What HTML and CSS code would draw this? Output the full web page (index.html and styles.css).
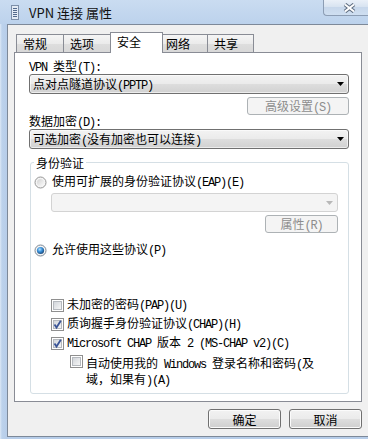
FILE: index.html
```html
<!DOCTYPE html>
<html lang="zh-CN">
<head>
    <meta charset="UTF-8">
    <title>VPN 连接 属性</title>
    <link rel="stylesheet" href="styles.css">
</head>
<body>
    <svg class="defs" width="0" height="0">
        <defs>
            <linearGradient id="ringFill" x1="0" y1="0" x2="1" y2="1">
                <stop offset="0" stop-color="#d2d2d2"/>
                <stop offset="1" stop-color="#fbfbfb"/>
            </linearGradient>
            <radialGradient id="dotFill" cx="0.4" cy="0.35" r="0.7">
                <stop offset="0" stop-color="#b8e3ff"/>
                <stop offset="0.45" stop-color="#3b93dc"/>
                <stop offset="1" stop-color="#17406f"/>
            </radialGradient>
            <linearGradient id="boxFill" x1="0" y1="0" x2="1" y2="1">
                <stop offset="0" stop-color="#cfd3d8"/>
                <stop offset="1" stop-color="#f8f8f8"/>
            </linearGradient>
        </defs>
    </svg>

    <div class="window">
        <div class="titlebar">
            <svg class="app-icon" width="8" height="15" viewBox="0 0 8 15">
                <rect x=".5" y=".5" width="7" height="14" fill="#e3ebf5" stroke="#7d8fa8"/>
                <path d="M2 3.5h4M2 5.5h4M2 7.5h4M2 9.5h4M2 11.5h4" stroke="#53698b"/>
            </svg>
            <span class="title">VPN 连接 属性</span>
            <div class="close">
                <svg width="13" height="10" viewBox="0 0 13 10">
                    <path d="M2 1.5L11 8.5M11 1.5L2 8.5" stroke="#5f6d80" stroke-width="4"/>
                    <path d="M2 1.5L11 8.5M11 1.5L2 8.5" stroke="#fff" stroke-width="2"/>
                </svg>
            </div>
        </div>

        <div class="frame">
            <div class="client">
                <div class="tabs">
                    <div class="tab t1">常规</div>
                    <div class="tab t2">选项</div>
                    <div class="tab active">安全</div>
                    <div class="tab t4">网络</div>
                    <div class="tab t5">共享</div>
                </div>

                <div class="panel">
                    <div class="label"><span class="en">VPN </span>类型<span class="en">(T):</span></div>
                    <div class="combo">
                        <span>点对点隧道协议<span class="en">(PPTP)</span></span>
                        <svg class="arrow" width="7" height="4" viewBox="0 0 7 4"><path d="M0 0h7L3.5 4z"/></svg>
                    </div>
                    <div class="btn-row">
                        <button class="btn disabled advanced">高级设置<span class="en">(S)</span></button>
                    </div>
                    <div class="label">数据加密<span class="en">(D):</span></div>
                    <div class="combo">
                        <span>可选加密<span class="en">(</span>没有加密也可以连接<span class="en">)</span></span>
                        <svg class="arrow" width="7" height="4" viewBox="0 0 7 4"><path d="M0 0h7L3.5 4z"/></svg>
                    </div>

                    <div class="group">
                        <div class="group-title">身份验证</div>

                        <div class="option radio-row">
                            <svg width="13" height="13" viewBox="0 0 13 13">
                                <circle cx="6.5" cy="6.5" r="5.5" fill="#f4f4f4" stroke="#959595"/>
                                <circle cx="6.5" cy="6.5" r="3.5" fill="url(#ringFill)"/>
                            </svg>
                            <span>使用可扩展的身份验证协议<span class="en">(EAP)(E)</span></span>
                        </div>

                        <div class="combo disabled">
                            <svg class="arrow" width="7" height="4" viewBox="0 0 7 4"><path d="M0 0h7L3.5 4z"/></svg>
                        </div>
                        <div class="btn-row inner">
                            <button class="btn disabled">属性<span class="en">(R)</span></button>
                        </div>

                        <div class="option radio-row second">
                            <svg width="13" height="13" viewBox="0 0 13 13">
                                <circle cx="6.5" cy="6.5" r="5.5" fill="#f4f4f4" stroke="#7b8794"/>
                                <circle cx="6.5" cy="6.5" r="3.6" fill="url(#dotFill)"/>
                            </svg>
                            <span>允许使用这些协议<span class="en">(P)</span></span>
                        </div>

                        <div class="checks">
                            <div class="option check-row">
                                <svg width="13" height="13" viewBox="0 0 13 13">
                                    <rect x=".5" y=".5" width="12" height="12" fill="#fff" stroke="#8f8f8f"/>
                                    <rect x="2.5" y="2.5" width="8" height="8" fill="url(#boxFill)" stroke="#b5b9be"/>
                                </svg>
                                <span>未加密的密码<span class="en">(PAP)(U)</span></span>
                            </div>
                            <div class="option check-row">
                                <svg width="13" height="13" viewBox="0 0 13 13">
                                    <rect x=".5" y=".5" width="12" height="12" fill="#fff" stroke="#8f8f8f"/>
                                    <rect x="2.5" y="2.5" width="8" height="8" fill="url(#boxFill)" stroke="#b5b9be"/>
                                    <path d="M3.5 6.5L5.5 9.5L9.8 2.8" fill="none" stroke="#3b5597" stroke-width="1.8"/>
                                </svg>
                                <span>质询握手身份验证协议<span class="en">(CHAP)(H)</span></span>
                            </div>
                            <div class="option check-row">
                                <svg width="13" height="13" viewBox="0 0 13 13">
                                    <rect x=".5" y=".5" width="12" height="12" fill="#fff" stroke="#8f8f8f"/>
                                    <rect x="2.5" y="2.5" width="8" height="8" fill="url(#boxFill)" stroke="#b5b9be"/>
                                    <path d="M3.5 6.5L5.5 9.5L9.8 2.8" fill="none" stroke="#3b5597" stroke-width="1.8"/>
                                </svg>
                                <span><span class="en">Microsoft CHAP </span>版本<span class="en"> 2 (MS-CHAP v2)(C)</span></span>
                            </div>
                            <div class="option check-row sub">
                                <svg width="13" height="13" viewBox="0 0 13 13">
                                    <rect x=".5" y=".5" width="12" height="12" fill="#fff" stroke="#8f8f8f"/>
                                    <rect x="2.5" y="2.5" width="8" height="8" fill="url(#boxFill)" stroke="#b5b9be"/>
                                </svg>
                                <span class="wrap">自动使用我的<span class="en"> Windows </span>登录名称和密码<span class="en">(</span>及<br>域，如果有<span class="en">)(A)</span></span>
                            </div>
                        </div>
                    </div>
                </div>

                <div class="actions">
                    <button class="btn">确定</button>
                    <button class="btn">取消</button>
                </div>
            </div>
        </div>
    </div>
</body>
</html>
```

FILE: styles.css
```css
* {
    box-sizing: border-box;
}
body {
    margin: 0;
    width: 368px;
    height: 439px;
    overflow: hidden;
    font-family: "Noto Sans CJK SC", sans-serif;
    font-size: 12px;
    color: #000;
}
.defs {
    display: block;
    width: 0;
    height: 0;
}
.en {
    font-family: "Liberation Mono", monospace;
    font-size: 12px;
    letter-spacing: -1.2px;
    white-space: pre;
}
.window {
    height: 439px;
    display: flex;
    flex-direction: column;
    background: linear-gradient(90deg, #dce8f6 0, #bcd2ec 2px, #b7cde9 7px);
}
.titlebar {
    height: 24px;
    display: flex;
    align-items: center;
    padding-left: 11px;
    background: linear-gradient(#cadcf1, #bcd2ec);
}
.title {
    margin-left: 10px;
    font-size: 13px;
    color: #111;
}
.close {
    margin-left: auto;
    align-self: flex-start;
    width: 45px;
    height: 16px;
    display: flex;
    align-items: center;
    justify-content: center;
    padding-left: 6px;
    border: 1px solid #8c9db4;
    border-top: 0;
    border-right: 0;
    border-radius: 0 0 0 4px;
    background: linear-gradient(#eaf0f8, #d6e2f0 50%, #c7d7eb 50%, #cfdff1);
}
.frame {
    flex: 1;
    display: flex;
    padding: 0 0 2px 7px;
}
.client {
    flex: 1;
    display: flex;
    flex-direction: column;
    padding: 0 6px;
    background: #f0f0f0;
    border: 1px solid #7d8999;
    border-right: 0;
}
.tabs {
    display: flex;
    height: 21px;
    margin: 7px 0 0 2px;
    position: relative;
    z-index: 1;
}
.tab {
    height: 18px;
    margin-top: 2px;
    margin-left: -1px;
    padding: 1px 0 0 6px;
    line-height: 16px;
    border: 1px solid #898c95;
    border-bottom: 0;
    background: linear-gradient(#f5f5f5, #ebebeb 50%, #dedede 50%, #d8d8d8);
}
.tab.t1 {
    width: 48px;
    margin-left: 0;
}
.tab.t2 {
    width: 48px;
}
.tab.active {
    width: 53px;
    height: 21px;
    margin-top: 0;
    padding: 0 0 0 6px;
    line-height: 17px;
    background: #fff;
    position: relative;
    z-index: 1;
}
.tab.t4 {
    width: 46px;
    padding-left: 3px;
}
.tab.t5 {
    width: 47px;
}
.panel {
    height: 350px;
    margin-top: -1px;
    padding: 6px 12px 0 14px;
    background: #fff;
    border: 1px solid #898c95;
}
.label {
    height: 14px;
    line-height: 14px;
}
.combo {
    height: 20px;
    margin-top: 1px;
    display: flex;
    align-items: center;
    padding: 0 4px 0 3px;
    border: 1px solid #707070;
    border-radius: 3px;
    background: linear-gradient(#f3f3f3, #ebebeb 48%, #dddddd 52%, #d1d1d1);
    box-shadow: inset 0 0 0 1px rgba(255, 255, 255, 0.6);
}
.combo .arrow {
    margin-left: auto;
    fill: #000;
}
.combo.disabled {
    width: 287px;
    height: 19px;
    margin: 4px 0 0 20px;
    border-color: #d3d3d3;
    background: #f4f4f4;
    box-shadow: none;
}
.combo.disabled .arrow {
    fill: #b8b8b8;
}
.btn-row {
    display: flex;
    justify-content: flex-end;
    margin: 3px 0 -1px;
}
.btn-row.inner {
    margin: 3px 10px 0 0;
}
.btn {
    width: 73px;
    height: 20px;
    padding: 0;
    font: inherit;
    color: #000;
    border: 1px solid #707070;
    border-radius: 3px;
    background: linear-gradient(#f2f2f2, #ebebeb 48%, #dddddd 52%, #cfcfcf);
    box-shadow: inset 0 0 0 1px #fbfbfb;
}
.btn.disabled {
    height: 18px;
    line-height: 15px;
    color: #8d8d8d;
    border-color: #adb2b5;
    background: #f4f4f4;
    box-shadow: none;
}
.btn.advanced {
    width: 102px;
}
.group {
    margin: 13px 0 0 1px;
    padding-bottom: 5px;
    border: 1px solid #d5dfe5;
    border-radius: 3px;
}
.group-title {
    width: max-content;
    margin: -7px 0 0 3px;
    padding: 0 2px;
    line-height: 13px;
    background: #fff;
}
.option {
    display: flex;
    align-items: center;
    height: 14px;
    line-height: 14px;
}
.radio-row {
    margin-top: 6px;
    padding-left: 3px;
    gap: 5px;
}
.radio-row.second {
    margin-top: 10px;
}
.checks {
    display: flex;
    flex-direction: column;
    gap: 5px;
    margin-top: 41px;
}
.check-row {
    padding-left: 20px;
    gap: 3px;
}
.check-row.sub {
    height: auto;
    align-items: flex-start;
    padding-left: 39px;
}
.check-row .wrap {
    margin-top: 1px;
    line-height: 13px;
}
.actions {
    display: flex;
    justify-content: flex-end;
    gap: 8px;
    margin-top: 7px;
}
```
